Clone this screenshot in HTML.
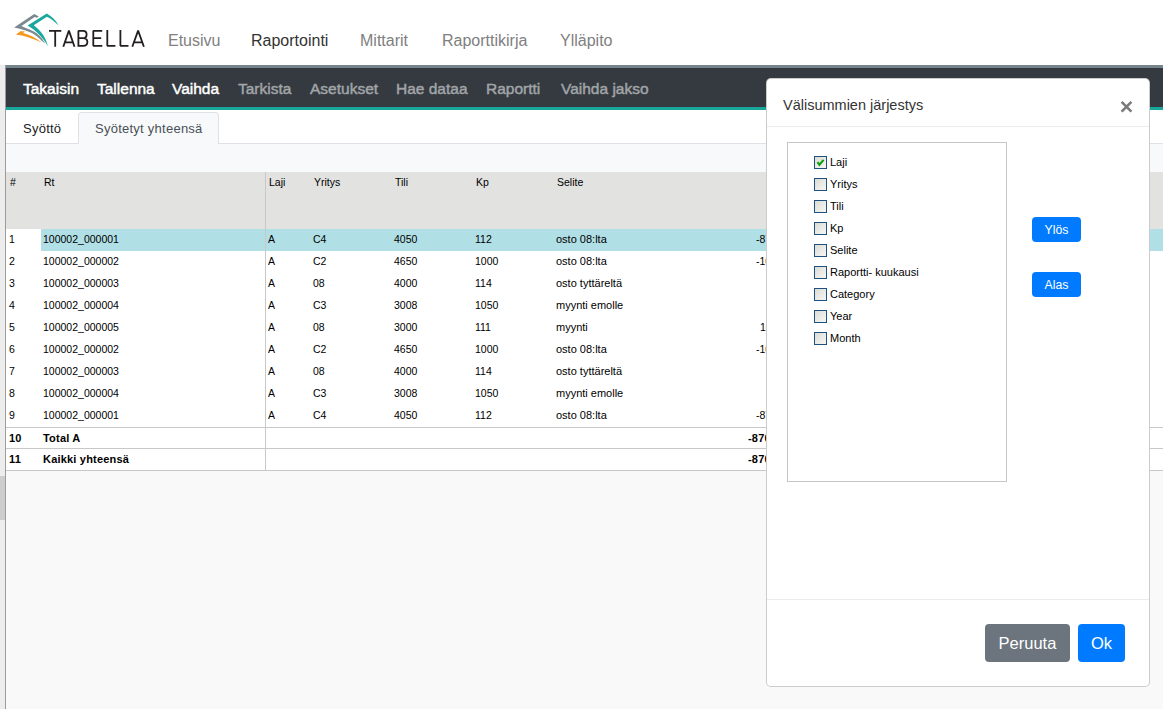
<!DOCTYPE html>
<html><head><meta charset="utf-8">
<style>
*{box-sizing:border-box;margin:0;padding:0}
html,body{width:1163px;height:709px;overflow:hidden;background:#fff;font-family:"Liberation Sans",sans-serif;position:relative}
.a{position:absolute;white-space:nowrap}
.nav{font-size:16px;color:#808080;top:32px;line-height:18px}
.nav.act{color:#333}
.tb{font-size:15.5px;font-weight:normal;-webkit-text-stroke:0.45px currentColor;color:#fff;top:80.5px;line-height:16px}
.tb.dis{color:#a2a5a8}
.t11{font-size:10.5px;color:#000;line-height:12px}
.b11{font-size:11px;letter-spacing:0.2px;color:#000;font-weight:bold;line-height:12px}
.cb{position:absolute;left:814px;width:13px;height:13px;border:1px solid #1c5180;background:linear-gradient(135deg,#dcdcd6,#f6f6f4)}
.cl{position:absolute;left:830px;font-size:11px;color:#000;line-height:12px;white-space:nowrap}
</style></head><body>
<!-- logo -->
<svg class="a" style="left:0;top:0" width="160" height="60" viewBox="0 0 160 60">
  <path d="M34.3,13.9 L38.8,16.6 L37,17.7 L34.7,16.9 L21.4,26.1 C28,29.5 39,31 45,43.6 C35,34 33,31.5 14.1,27.4 Z" fill="#7b8990"/>
  <path d="M27.6,25.5 L46.8,13.6 C52,16.5 56,20.5 58.8,25.8 C55,22 51,18.5 46.8,16.8 L33.8,25.2 C40,30 46,37 47.9,46.2 C43,37.5 36,30.5 27.6,25.5 Z" fill="#1aa89e"/>
  <path d="M16,34.5 L20.4,31.2 L24.8,31.3 L23.2,33.1 C29,34.5 36,38 41.6,42.6 C36,40 29,37 22,35.5 C19,35 17,34.8 16,34.5 Z" fill="#f4981f"/>
  <g stroke="#231f20" stroke-width="1.8" fill="none" stroke-linejoin="bevel">
    <path d="M49,30.9 H61.3 M55.2,30.9 V46.7"/>
    <path d="M63.3,46.7 L68.9,30.6 L74.5,46.7 M65,42.4 H72.8"/>
    <path d="M78.4,46.7 V30.9 H83 C85.5,30.9 86.6,32.4 86.6,34.4 C86.6,36.6 85.2,38.1 83,38.1 H78.4 M83,38.1 C86,38.1 87.4,39.8 87.4,42 C87.4,44.4 86,45.8 83.2,45.8 H78.4"/>
    <path d="M102.2,30.9 H93.3 V45.8 H102.3 M93.3,38.1 H101.2"/>
    <path d="M107.3,30 V45.8 H115.4"/>
    <path d="M120.4,30 V45.8 H128.5"/>
    <path d="M132.3,46.7 L138.1,30.6 L143.9,46.7 M134,42.4 H142.2"/>
  </g>
</svg>
<div class="a nav" style="left:168px">Etusivu</div>
<div class="a nav act" style="left:251px">Raportointi</div>
<div class="a nav" style="left:360px">Mittarit</div>
<div class="a nav" style="left:442px">Raporttikirja</div>
<div class="a nav" style="left:560px">Ylläpito</div>

<!-- left strip -->
<div class="a" style="left:0;top:65px;width:5px;height:644px;background:#ededed"></div>
<div class="a" style="left:0;top:476px;width:5px;height:44px;background:#cdcdcd"></div>
<div class="a" style="left:5px;top:65px;width:1px;height:644px;background:#9c9c9c"></div>

<!-- toolbar -->
<div class="a" style="left:6px;top:65px;width:1157px;height:3px;background:#76848c"></div>
<div class="a" style="left:6px;top:68px;width:1157px;height:39px;background:#343a40"></div>
<div class="a" style="left:6px;top:107px;width:1157px;height:3px;background:#17a89b"></div>
<div class="a tb" style="left:23px">Takaisin</div>
<div class="a tb" style="left:97px">Tallenna</div>
<div class="a tb" style="left:172px">Vaihda</div>
<div class="a tb dis" style="left:238px">Tarkista</div>
<div class="a tb dis" style="left:310px">Asetukset</div>
<div class="a tb dis" style="left:396px">Hae dataa</div>
<div class="a tb dis" style="left:486px">Raportti</div>
<div class="a tb dis" style="left:561px">Vaihda jakso</div>

<!-- tabs -->
<div class="a" style="left:6px;top:143px;width:1157px;height:1px;background:#dee2e6"></div>
<div class="a" style="left:78px;top:112px;width:141px;height:32px;background:#f8f9fa;border:1px solid #dee2e6;border-bottom:none;border-radius:4px 4px 0 0"></div>
<div class="a" style="left:23px;top:121px;font-size:13px;letter-spacing:0.25px;line-height:15px;color:#222">Syöttö</div>
<div class="a" style="left:95px;top:121px;font-size:13px;letter-spacing:0.25px;line-height:15px;color:#495057">Syötetyt yhteensä</div>
<div class="a" style="left:6px;top:144px;width:1157px;height:28px;background:#f8f9fa"></div>

<!-- table -->
<div class="a" style="left:6px;top:172px;width:1157px;height:57px;background:#e2e2e0"></div>
<div class="a" style="left:6px;top:229px;width:1157px;height:241px;background:#fff"></div>
<div class="a" style="left:6px;top:470px;width:1157px;height:239px;background:#f9f9f9"></div>
<div class="a" style="left:41px;top:229px;width:1122px;height:22px;background:#b0dfe5"></div>
<div class="a" style="left:265px;top:172px;width:1px;height:298px;background:#c8c8c8"></div>
<div class="a" style="left:6px;top:427px;width:1157px;height:1px;background:#c8c8c8"></div>
<div class="a" style="left:6px;top:448px;width:1157px;height:1px;background:#c8c8c8"></div>
<div class="a" style="left:6px;top:470px;width:1157px;height:1px;background:#c8c8c8"></div>

<div id="tbl">
<div class="a t11" style="left:10px;top:176px">#</div>
<div class="a t11" style="left:44px;top:176px">Rt</div>
<div class="a t11" style="left:269px;top:176px">Laji</div>
<div class="a t11" style="left:314px;top:176px">Yritys</div>
<div class="a t11" style="left:395px;top:176px">Tili</div>
<div class="a t11" style="left:476px;top:176px">Kp</div>
<div class="a t11" style="left:557px;top:176px">Selite</div>
<div class="a t11" style="left:9px;top:233px">1</div>
<div class="a t11" style="left:43px;top:233px">100002_000001</div>
<div class="a t11" style="left:268px;top:233px">A</div>
<div class="a t11" style="left:313px;top:233px">C4</div>
<div class="a t11" style="left:394px;top:233px">4050</div>
<div class="a t11" style="left:475px;top:233px">112</div>
<div class="a t11" style="left:556px;top:233px;font-size:11px">osto 08:lta</div>
<div class="a t11" style="left:756px;top:233px">-870,00</div>
<div class="a t11" style="left:9px;top:255px">2</div>
<div class="a t11" style="left:43px;top:255px">100002_000002</div>
<div class="a t11" style="left:268px;top:255px">A</div>
<div class="a t11" style="left:313px;top:255px">C2</div>
<div class="a t11" style="left:394px;top:255px">4650</div>
<div class="a t11" style="left:475px;top:255px">1000</div>
<div class="a t11" style="left:556px;top:255px;font-size:11px">osto 08:lta</div>
<div class="a t11" style="left:756px;top:255px">-100,00</div>
<div class="a t11" style="left:9px;top:277px">3</div>
<div class="a t11" style="left:43px;top:277px">100002_000003</div>
<div class="a t11" style="left:268px;top:277px">A</div>
<div class="a t11" style="left:313px;top:277px">08</div>
<div class="a t11" style="left:394px;top:277px">4000</div>
<div class="a t11" style="left:475px;top:277px">114</div>
<div class="a t11" style="left:556px;top:277px;font-size:11px">osto tyttäreltä</div>
<div class="a t11" style="left:9px;top:299px">4</div>
<div class="a t11" style="left:43px;top:299px">100002_000004</div>
<div class="a t11" style="left:268px;top:299px">A</div>
<div class="a t11" style="left:313px;top:299px">C3</div>
<div class="a t11" style="left:394px;top:299px">3008</div>
<div class="a t11" style="left:475px;top:299px">1050</div>
<div class="a t11" style="left:556px;top:299px;font-size:11px">myynti emolle</div>
<div class="a t11" style="left:9px;top:321px">5</div>
<div class="a t11" style="left:43px;top:321px">100002_000005</div>
<div class="a t11" style="left:268px;top:321px">A</div>
<div class="a t11" style="left:313px;top:321px">08</div>
<div class="a t11" style="left:394px;top:321px">3000</div>
<div class="a t11" style="left:475px;top:321px">111</div>
<div class="a t11" style="left:556px;top:321px;font-size:11px">myynti</div>
<div class="a t11" style="left:760px;top:321px">100,00</div>
<div class="a t11" style="left:9px;top:343px">6</div>
<div class="a t11" style="left:43px;top:343px">100002_000002</div>
<div class="a t11" style="left:268px;top:343px">A</div>
<div class="a t11" style="left:313px;top:343px">C2</div>
<div class="a t11" style="left:394px;top:343px">4650</div>
<div class="a t11" style="left:475px;top:343px">1000</div>
<div class="a t11" style="left:556px;top:343px;font-size:11px">osto 08:lta</div>
<div class="a t11" style="left:756px;top:343px">-100,00</div>
<div class="a t11" style="left:9px;top:365px">7</div>
<div class="a t11" style="left:43px;top:365px">100002_000003</div>
<div class="a t11" style="left:268px;top:365px">A</div>
<div class="a t11" style="left:313px;top:365px">08</div>
<div class="a t11" style="left:394px;top:365px">4000</div>
<div class="a t11" style="left:475px;top:365px">114</div>
<div class="a t11" style="left:556px;top:365px;font-size:11px">osto tyttäreltä</div>
<div class="a t11" style="left:9px;top:387px">8</div>
<div class="a t11" style="left:43px;top:387px">100002_000004</div>
<div class="a t11" style="left:268px;top:387px">A</div>
<div class="a t11" style="left:313px;top:387px">C3</div>
<div class="a t11" style="left:394px;top:387px">3008</div>
<div class="a t11" style="left:475px;top:387px">1050</div>
<div class="a t11" style="left:556px;top:387px;font-size:11px">myynti emolle</div>
<div class="a t11" style="left:9px;top:409px">9</div>
<div class="a t11" style="left:43px;top:409px">100002_000001</div>
<div class="a t11" style="left:268px;top:409px">A</div>
<div class="a t11" style="left:313px;top:409px">C4</div>
<div class="a t11" style="left:394px;top:409px">4050</div>
<div class="a t11" style="left:475px;top:409px">112</div>
<div class="a t11" style="left:556px;top:409px;font-size:11px">osto 08:lta</div>
<div class="a t11" style="left:756px;top:409px">-870,00</div>
<div class="a b11" style="left:9px;top:432px">10</div>
<div class="a b11" style="left:43px;top:432px">Total A</div>
<div class="a b11" style="left:748px;top:432px">-870,00</div>
<div class="a b11" style="left:9px;top:453px">11</div>
<div class="a b11" style="left:43px;top:453px">Kaikki yhteensä</div>
<div class="a b11" style="left:748px;top:453px">-870,00</div>
</div><!--/tbl-->

<!-- modal -->
<div class="a" style="left:766px;top:78px;width:384px;height:609px;background:#fff;border:1px solid rgba(0,0,0,.2);border-radius:5px"></div>
<div class="a" style="left:767px;top:126px;width:382px;height:1px;background:#e9ecef"></div>
<div class="a" style="left:783px;top:97px;font-size:14.5px;line-height:16px;color:#333">Välisummien järjestys</div>
<svg class="a" style="left:1119px;top:99px" width="15" height="15" viewBox="0 0 15 15"><path d="M2.6,2.9 L12.4,12.6 M12.4,2.9 L2.6,12.6" stroke="#7a7a7a" stroke-width="2.6"/></svg>
<div class="a" style="left:787px;top:142px;width:220px;height:340px;border:1px solid #c6c6c6"></div>

<div class="cb" style="top:156px"></div>
<svg class="a" style="left:815px;top:157px" width="11" height="11" viewBox="0 0 11 11"><path d="M2.5,5.2 L4.4,7.7 L8.6,2.9" stroke="#10a010" stroke-width="2.2" fill="none"/></svg>
<div class="cl" style="top:156px">Laji</div>
<div class="cb" style="top:178px"></div><div class="cl" style="top:178px">Yritys</div>
<div class="cb" style="top:200px"></div><div class="cl" style="top:200px">Tili</div>
<div class="cb" style="top:222px"></div><div class="cl" style="top:222px">Kp</div>
<div class="cb" style="top:244px"></div><div class="cl" style="top:244px">Selite</div>
<div class="cb" style="top:266px"></div><div class="cl" style="top:266px">Raportti- kuukausi</div>
<div class="cb" style="top:288px"></div><div class="cl" style="top:288px">Category</div>
<div class="cb" style="top:310px"></div><div class="cl" style="top:310px">Year</div>
<div class="cb" style="top:332px"></div><div class="cl" style="top:332px">Month</div>

<div class="a" style="left:1032px;top:217px;width:49px;height:25px;background:#007bff;border-radius:4px;color:#fff;font-size:12.3px;line-height:27px;text-align:center">Ylös</div>
<div class="a" style="left:1032px;top:272px;width:49px;height:25px;background:#007bff;border-radius:4px;color:#fff;font-size:12.3px;line-height:27px;text-align:center">Alas</div>

<div class="a" style="left:767px;top:599px;width:382px;height:1px;background:#e9ecef"></div>
<div class="a" style="left:985px;top:624px;width:85px;height:38px;background:#6c757d;border-radius:4px;color:#fff;font-size:16.5px;line-height:38px;text-align:center">Peruuta</div>
<div class="a" style="left:1078px;top:624px;width:47px;height:38px;background:#007bff;border-radius:4px;color:#fff;font-size:16.5px;line-height:38px;text-align:center">Ok</div>
</body></html>
